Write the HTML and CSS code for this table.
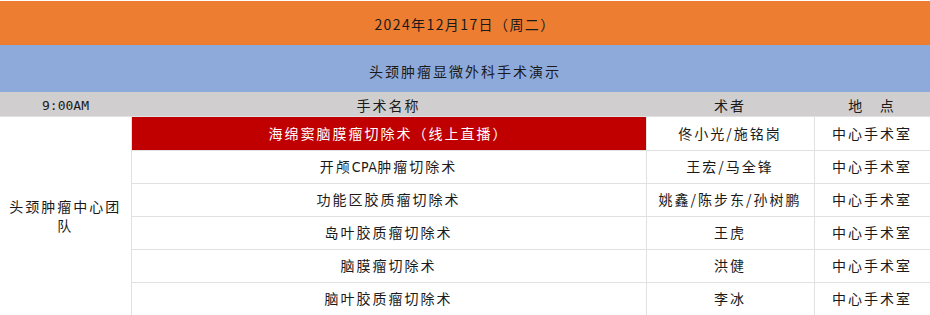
FILE: index.html
```html
<!DOCTYPE html>
<html lang="zh-CN">
<head>
<meta charset="utf-8">
<link rel="stylesheet" href="styles.css">
</head>
<body>
<table class="sched">
  <colgroup>
    <col class="c-time"><col class="c-name"><col class="c-doc"><col class="c-loc">
  </colgroup>
  <tr class="r-date"><td colspan="4">2024年12月17日（周二）</td></tr>
  <tr class="r-title"><td colspan="4">头颈肿瘤显微外科手术演示</td></tr>
  <tr class="r-head"><td><span class="mono">9:00AM</span></td><td>手术名称</td><td>术者</td><td>地&nbsp;&nbsp;&nbsp;点</td></tr>
  <tr class="r-body r-first"><td class="team" rowspan="6">头颈肿瘤中心团队</td><td class="live">海绵窦脑膜瘤切除术（线上直播）</td><td>佟小光/施铭岗</td><td>中心手术室</td></tr>
  <tr class="r-body"><td>开颅<span class="lat">CPA</span>肿瘤切除术</td><td>王宏/马全锋</td><td>中心手术室</td></tr>
  <tr class="r-body"><td>功能区胶质瘤切除术</td><td>姚鑫/陈步东/孙树鹏</td><td>中心手术室</td></tr>
  <tr class="r-body"><td>岛叶胶质瘤切除术</td><td>王虎</td><td>中心手术室</td></tr>
  <tr class="r-body"><td>脑膜瘤切除术</td><td>洪健</td><td>中心手术室</td></tr>
  <tr class="r-body"><td>脑叶胶质瘤切除术</td><td>李冰</td><td>中心手术室</td></tr>
</table>
</body>
</html>
```
FILE: styles.css
```css
html, body {
  margin: 0;
  padding: 0;
  background: #ffffff;
}
body {
  font-family: "Noto Sans CJK SC", "Noto Sans", sans-serif;
  font-size: 14px;
  color: #1a1a1a;
}
.sched {
  width: 930px;
  table-layout: fixed;
  border-collapse: collapse;
  border-spacing: 0;
  margin-top: 1px;
}
.c-time { width: 131px; }
.c-name { width: 515px; }
.c-doc { width: 168px; }
.c-loc { width: 116px; }
.sched td {
  padding: 0;
  text-align: center;
  vertical-align: middle;
  letter-spacing: 2px;
  line-height: 19px;
  white-space: nowrap;
}
.mono {
  font-family: "DejaVu Sans Mono", "Liberation Mono", monospace;
  font-size: 13px;
  letter-spacing: 0;
}
.lat {
  font-family: "DejaVu Sans Condensed", "Noto Sans", sans-serif;
  letter-spacing: 0.5px;
}
.r-date td {
  background: #ed7d31;
  height: 44px;
  padding-top: 3px;
  box-sizing: border-box;
  letter-spacing: 1.4px;
}
.r-title td {
  background: #8eaadb;
  height: 47px;
  padding-top: 5px;
  box-sizing: border-box;
}
.r-head td {
  background: #d0cece;
  height: 24px;
  padding-top: 3px;
  box-sizing: border-box;
}
.r-body td {
  height: 33px;
  border: 1px solid #e1e1e1;
  box-sizing: border-box;
}
.r-first td { height: 34px; }
.sched .team {
  white-space: normal;
  padding: 0 6px;
  border-left: none;
}
.r-body td:last-child { border-right: 1px solid #e1e1e1; }
.sched .live {
  background: #c00000;
  color: #ffffff;
}
```
